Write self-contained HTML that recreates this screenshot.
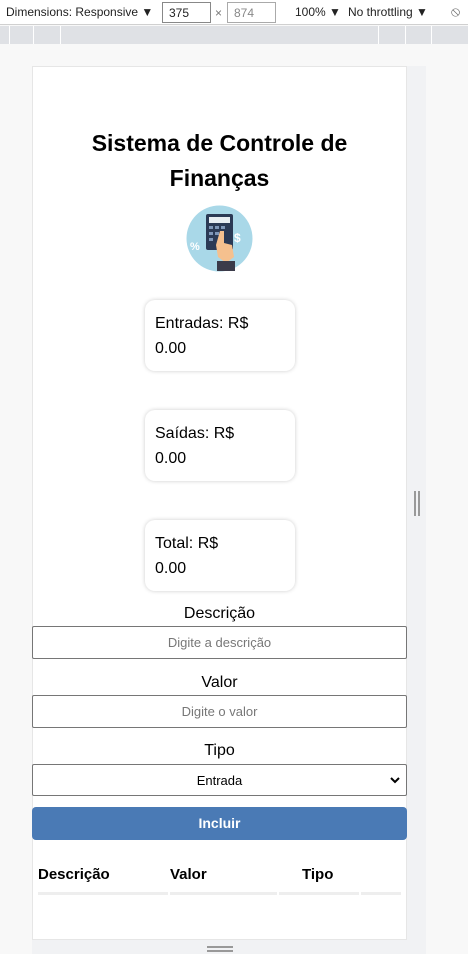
<!DOCTYPE html>
<html><head><meta charset="utf-8"><style>
*{margin:0;padding:0;box-sizing:border-box}
body{width:468px;height:954px;background:#f8f8f8;font-family:"Liberation Sans",sans-serif;position:relative;overflow:hidden;color:#000}
.a{position:absolute}
.bar{left:0;top:0;width:468px;height:25px;background:#fff;border-bottom:1px solid #d0d0d0;font-size:12px;color:#222}
.rul{left:0;top:26px;width:468px;height:18px;background:#dfe1e5}
.page{left:32px;top:66px;width:375px;height:874px;background:#fff;border:1px solid #e6e6e6}
.gut{left:407px;top:66px;width:19px;height:888px;background:#f1f2f4}
.gutb{left:32px;top:940px;width:394px;height:14px;background:#f1f2f4}
.card{left:145px;width:150px;height:71px;border-radius:10px;box-shadow:0 0 4px rgba(0,0,0,.2);background:#fff;font-size:16px;line-height:25px;padding:11px 0 0 10px}
.lbl{left:32px;width:375px;text-align:center;font-size:16px}
.inp{left:32px;width:375px;height:33px;border:1px solid #767676;border-radius:2px;text-align:center;font-size:13px;line-height:31px;color:#777;background:#fff}
.th{top:866px;font-size:15px;font-weight:bold}
.ul{top:892px;height:3px;background:#eee}
</style></head><body>
<div class="a bar">
<span class="a" style="left:6px;top:5px">Dimensions: Responsive ▼</span>
<div class="a" style="left:162px;top:2px;width:49px;height:21px;border:1px solid #888;padding:3px 6px">375</div>
<span class="a" style="left:215px;top:6px;color:#777">×</span>
<div class="a" style="left:227px;top:2px;width:49px;height:21px;border:1px solid #aaa;padding:3px 6px;color:#888">874</div>
<span class="a" style="left:295px;top:5px">100% ▼</span>
<span class="a" style="left:348px;top:5px">No throttling ▼</span>
<span class="a" style="left:451px;top:3px;color:#666;font-size:14px">⦸</span>
</div>
<div class="a rul">
<div class="a" style="left:9px;top:0;width:1px;height:18px;background:#fff"></div>
<div class="a" style="left:33px;top:0;width:1px;height:18px;background:#fff"></div>
<div class="a" style="left:60px;top:0;width:1px;height:18px;background:#fff"></div>
<div class="a" style="left:378px;top:0;width:1px;height:18px;background:#fff"></div>
<div class="a" style="left:405px;top:0;width:1px;height:18px;background:#fff"></div>
<div class="a" style="left:431px;top:0;width:1px;height:18px;background:#fff"></div>
</div>
<div class="a gut"></div><div class="a gutb"></div>
<div class="a" style="left:414px;top:491px;width:2px;height:25px;background:#999"></div>
<div class="a" style="left:418px;top:491px;width:2px;height:25px;background:#999"></div>
<div class="a" style="left:207px;top:946px;width:26px;height:2px;background:#999"></div>
<div class="a" style="left:207px;top:950px;width:26px;height:2px;background:#999"></div>
<div class="a page"></div>
<div class="a" style="left:32px;top:126px;width:375px;text-align:center;font-size:23px;font-weight:bold;line-height:35px">Sistema de Controle de<br>Finanças</div>
<svg class="a" style="left:186px;top:205px" width="67" height="67" viewBox="0 0 67 67">
<circle cx="33.5" cy="33.5" r="33" fill="#a9d8e8"/>
<rect x="20" y="9" width="27" height="36" rx="2" fill="#2b3a55"/>
<rect x="23" y="12" width="21" height="6" fill="#e8eef2"/>
<g fill="#7f97b8"><rect x="23" y="21" width="4" height="3"/><rect x="29" y="21" width="4" height="3"/><rect x="35" y="21" width="4" height="3"/><rect x="23" y="27" width="4" height="3"/><rect x="29" y="27" width="4" height="3"/><rect x="23" y="33" width="4" height="3"/></g>
<path d="M34 26 L38 26 L38 38 L46 40 L48 52 L40 58 L32 52 L30 40 Z" fill="#f5c08e"/>
<rect x="31" y="56" width="18" height="10" fill="#3b3b4a"/>
<text x="4" y="45" font-size="11" font-weight="bold" fill="#fff" font-family="Liberation Sans">%</text>
<text x="48" y="37" font-size="12" font-weight="bold" fill="#fff" font-family="Liberation Sans">$</text>
</svg>
<div class="a card" style="top:300px">Entradas: R$<br>0.00</div>
<div class="a card" style="top:410px">Saídas: R$<br>0.00</div>
<div class="a card" style="top:520px">Total: R$<br>0.00</div>
<div class="a lbl" style="top:605px">Descrição</div>
<div class="a inp" style="top:626px">Digite a descrição</div>
<div class="a lbl" style="top:674px">Valor</div>
<div class="a inp" style="top:695px">Digite o valor</div>
<div class="a lbl" style="top:742px">Tipo</div>
<div class="a inp" style="top:764px;height:32px;color:#000">Entrada<svg class="a" style="right:6px;top:12px" width="10" height="7" viewBox="0 0 10 7"><path d="M1 1 L5 5 L9 1" fill="none" stroke="#000" stroke-width="2"/></svg></div>
<div class="a" style="left:32px;top:807px;width:375px;height:33px;background:#4a7ab5;border-radius:4px;color:#fff;text-align:center;font-size:14px;font-weight:bold;line-height:33px">Incluir</div>
<div class="a th" style="left:38px">Descrição</div>
<div class="a th" style="left:170px">Valor</div>
<div class="a th" style="left:302px">Tipo</div>
<div class="a ul" style="left:38px;width:130px"></div>
<div class="a ul" style="left:170px;width:107px"></div>
<div class="a ul" style="left:279px;width:80px"></div>
<div class="a ul" style="left:361px;width:40px"></div>
</body></html>
